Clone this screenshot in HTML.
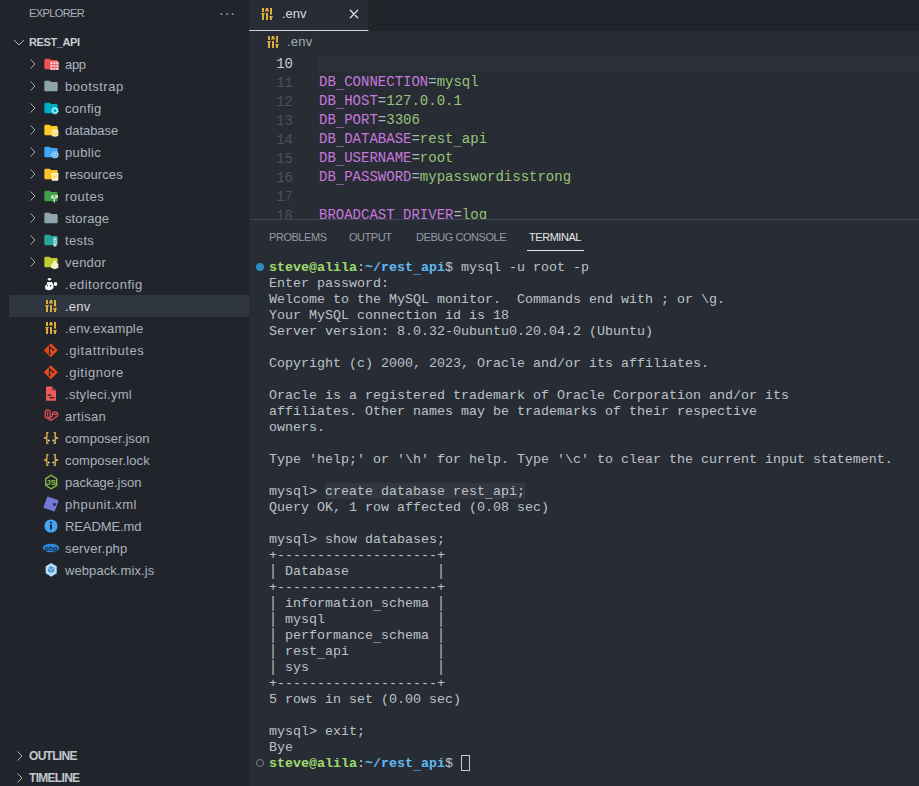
<!DOCTYPE html>
<html><head><meta charset="utf-8">
<style>
*{margin:0;padding:0;box-sizing:border-box}
html,body{width:919px;height:786px;overflow:hidden;background:#282c34}

body{position:relative;font-family:"Liberation Sans",sans-serif}
.abs{position:absolute}
#side{position:absolute;left:0;top:0;width:249px;height:786px;background:#21252b}
#sideborder{position:absolute;left:249px;top:0;width:1px;height:786px;background:#25292f}
.hdr{position:absolute;font-size:11px;color:#abb2bf;white-space:pre}
.row{position:absolute;left:0;width:249px;height:22px;line-height:22px;font-size:13px;color:#abb2bf;white-space:pre}
.row .t{position:absolute;left:65px;top:1px;letter-spacing:0.1px}
.row svg{position:absolute}
.sel{background:#30363f;left:9px;width:240px}
.sel .t{left:56px}
#tabbar{position:absolute;left:250px;top:0;width:669px;height:31px;background:#21252b;border-bottom:1px solid #1e2227}
#tab{position:absolute;left:249px;top:0;width:120px;height:31px;background:#282c34;border-bottom:1px solid #cfd3da;border-right:1px solid #1d2025}
#editor{position:absolute;left:250px;top:31px;width:669px;height:188px;background:#282c34;overflow:hidden}
.ln{position:absolute;left:0;margin-top:2px;width:43px;text-align:right;font-family:"Liberation Mono",monospace;font-size:14px;line-height:19px;color:#495162;white-space:pre}
.code{position:absolute;left:69px;margin-top:1px;font-family:"Liberation Mono",monospace;font-size:14px;line-height:19px;white-space:pre}
.k{color:#c678dd}.v{color:#98c379}.o{color:#abb2bf}
#panel{position:absolute;left:250px;top:219px;width:669px;height:567px;background:#282c34;border-top:1px solid #3e4452}
.ptab{position:absolute;top:11px;font-size:11px;color:#959ba5;white-space:pre;letter-spacing:-0.45px}
#term{position:absolute;left:19px;top:40px;font-family:"Liberation Mono",monospace;font-size:13.33px;line-height:16px;color:#bdc2ca;white-space:pre}
.pp{display:inline-block;transform:translateY(0.2px) scaleY(1.2)}
.us{position:relative;top:1.5px}.ue{position:relative;top:2px}
.pg{color:#9fdc6e;font-weight:bold;-webkit-text-stroke:0}.pb{color:#62b8f2;font-weight:bold;-webkit-text-stroke:0}
</style></head><body>
<div id="side">
  <div class="hdr" style="left:29px;top:7px;letter-spacing:-0.6px">EXPLORER</div>
  <div class="hdr" style="left:219px;top:4.5px;font-size:14px;letter-spacing:1px">···</div>
  <div class="hdr" style="left:29px;top:36px;font-weight:bold;color:#c8ccd4;letter-spacing:-0.4px">REST_API</div>
  <div class="row" style="top:53px"><span class="t" style="letter-spacing:-0.3px">app</span></div>
  <div class="row" style="top:75px"><span class="t" style="letter-spacing:0.49px">bootstrap</span></div>
  <div class="row" style="top:97px"><span class="t" style="letter-spacing:0.32px">config</span></div>
  <div class="row" style="top:119px"><span class="t" style="letter-spacing:-0.04px">database</span></div>
  <div class="row" style="top:141px"><span class="t" style="letter-spacing:0.34px">public</span></div>
  <div class="row" style="top:163px"><span class="t" style="letter-spacing:0.07px">resources</span></div>
  <div class="row" style="top:185px"><span class="t" style="letter-spacing:0.5px">routes</span></div>
  <div class="row" style="top:207px"><span class="t" style="letter-spacing:0.12px">storage</span></div>
  <div class="row" style="top:229px"><span class="t" style="letter-spacing:0.35px">tests</span></div>
  <div class="row" style="top:251px"><span class="t" style="letter-spacing:0.22px">vendor</span></div>
  <div class="row" style="top:273px"><span class="t" style="letter-spacing:0.53px">.editorconfig</span></div>
  <div class="row sel" style="top:295px"><span class="t" style="letter-spacing:0.2px;color:#d7dae0">.env</span></div>
  <div class="row" style="top:317px"><span class="t" style="letter-spacing:0.16px">.env.example</span></div>
  <div class="row" style="top:339px"><span class="t" style="letter-spacing:0.62px">.gitattributes</span></div>
  <div class="row" style="top:361px"><span class="t" style="letter-spacing:0.53px">.gitignore</span></div>
  <div class="row" style="top:383px"><span class="t" style="letter-spacing:0.29px">.styleci.yml</span></div>
  <div class="row" style="top:405px"><span class="t" style="letter-spacing:0.27px">artisan</span></div>
  <div class="row" style="top:427px"><span class="t" style="letter-spacing:0.05px">composer.json</span></div>
  <div class="row" style="top:449px"><span class="t" style="letter-spacing:0.13px">composer.lock</span></div>
  <div class="row" style="top:471px"><span class="t" style="letter-spacing:-0.02px">package.json</span></div>
  <div class="row" style="top:493px"><span class="t" style="letter-spacing:0.49px">phpunit.xml</span></div>
  <div class="row" style="top:515px"><span class="t" style="letter-spacing:-0.11px">README.md</span></div>
  <div class="row" style="top:537px"><span class="t" style="letter-spacing:0.17px">server.php</span></div>
  <div class="row" style="top:559px"><span class="t" style="letter-spacing:0.08px">webpack.mix.js</span></div>
  <div class="hdr" style="left:29px;top:748.5px;font-size:12px;font-weight:bold;color:#c2c7cf;letter-spacing:-0.7px">OUTLINE</div>
  <div class="hdr" style="left:29px;top:770.5px;font-size:12px;font-weight:bold;color:#c2c7cf;letter-spacing:-0.7px">TIMELINE</div>
</div>
<svg class="abs" style="left:0;top:0" width="249" height="786" viewBox="0 0 249 786"><polyline points="30.5,59.5 35,64 30.5,68.5" fill="none" stroke="#a3a9b3" stroke-width="1"/>
<polyline points="30.5,81.5 35,86 30.5,90.5" fill="none" stroke="#a3a9b3" stroke-width="1"/>
<polyline points="30.5,103.5 35,108 30.5,112.5" fill="none" stroke="#a3a9b3" stroke-width="1"/>
<polyline points="30.5,125.5 35,130 30.5,134.5" fill="none" stroke="#a3a9b3" stroke-width="1"/>
<polyline points="30.5,147.5 35,152 30.5,156.5" fill="none" stroke="#a3a9b3" stroke-width="1"/>
<polyline points="30.5,169.5 35,174 30.5,178.5" fill="none" stroke="#a3a9b3" stroke-width="1"/>
<polyline points="30.5,191.5 35,196 30.5,200.5" fill="none" stroke="#a3a9b3" stroke-width="1"/>
<polyline points="30.5,213.5 35,218 30.5,222.5" fill="none" stroke="#a3a9b3" stroke-width="1"/>
<polyline points="30.5,235.5 35,240 30.5,244.5" fill="none" stroke="#a3a9b3" stroke-width="1"/>
<polyline points="30.5,257.5 35,262 30.5,266.5" fill="none" stroke="#a3a9b3" stroke-width="1"/>
<g transform="translate(43,56) scale(0.6667)"><path d="M10 4H4c-1.1 0-2 .9-2 2v12c0 1.1.9 2 2 2h16c1.1 0 2-.9 2-2V8c0-1.1-.9-2-2-2h-8l-2-2z" fill="#ef5350"/><rect x="11" y="8.5" width="12.5" height="12.5" rx="0.8" fill="#ffcdd2"/><rect x="14.566666666666668" y="8.5" width="1.2" height="12.5" fill="#ef5350"/><rect x="18.733333333333334" y="8.5" width="1.2" height="12.5" fill="#ef5350"/><rect x="11" y="12.066666666666668" width="12.5" height="1.2" fill="#ef5350"/><rect x="11" y="16.233333333333334" width="12.5" height="1.2" fill="#ef5350"/></g>
<g transform="translate(43,78) scale(0.6667)"><path d="M10 4H4c-1.1 0-2 .9-2 2v12c0 1.1.9 2 2 2h16c1.1 0 2-.9 2-2V8c0-1.1-.9-2-2-2h-8l-2-2z" fill="#90a4ae"/></g>
<g transform="translate(43,100) scale(0.6667)"><path d="M10 4H4c-1.1 0-2 .9-2 2v12c0 1.1.9 2 2 2h16c1.1 0 2-.9 2-2V8c0-1.1-.9-2-2-2h-8l-2-2z" fill="#00acc1"/><circle cx="18" cy="16" r="4.2" fill="none" stroke="#8cf2f7" stroke-width="2.8" stroke-dasharray="1.7 1.1"/><circle cx="18" cy="16" r="3.3" fill="none" stroke="#8cf2f7" stroke-width="1.8"/></g>
<g transform="translate(43,122) scale(0.6667)"><path d="M10 4H4c-1.1 0-2 .9-2 2v12c0 1.1.9 2 2 2h16c1.1 0 2-.9 2-2V8c0-1.1-.9-2-2-2h-8l-2-2z" fill="#ffca28"/><ellipse cx="18" cy="13" rx="5" ry="2" fill="#ffecb3"/><rect x="13" y="13" width="10" height="7" fill="#ffecb3"/><ellipse cx="18" cy="20" rx="5" ry="2" fill="#ffecb3"/><path d="M13 15.5 q5 2.5 10 0 M13 18 q5 2.5 10 0" stroke="#ffca28" stroke-width="0.8" fill="none"/></g>
<g transform="translate(43,144) scale(0.6667)"><path d="M10 4H4c-1.1 0-2 .9-2 2v12c0 1.1.9 2 2 2h16c1.1 0 2-.9 2-2V8c0-1.1-.9-2-2-2h-8l-2-2z" fill="#42a5f5"/><circle cx="18" cy="16" r="5.3" fill="#bbdefb"/><g stroke="#42a5f5" stroke-width="0.9" fill="none"><ellipse cx="18" cy="16" rx="2.2" ry="5.3"/><line x1="12.7" y1="16" x2="23.3" y2="16"/><line x1="13.5" y1="13.3" x2="22.5" y2="13.3"/><line x1="13.5" y1="18.7" x2="22.5" y2="18.7"/></g></g>
<g transform="translate(43,166) scale(0.6667)"><path d="M10 4H4c-1.1 0-2 .9-2 2v12c0 1.1.9 2 2 2h16c1.1 0 2-.9 2-2V8c0-1.1-.9-2-2-2h-8l-2-2z" fill="#fbc02d"/><rect x="13" y="10" width="10" height="12" rx="1" fill="#fff9c4"/><g stroke="#fbc02d" stroke-width="1"><line x1="15" y1="13.5" x2="21" y2="13.5"/><line x1="15" y1="16" x2="21" y2="16"/><line x1="15" y1="18.5" x2="19" y2="18.5"/></g></g>
<g transform="translate(43,188) scale(0.6667)"><path d="M10 4H4c-1.1 0-2 .9-2 2v12c0 1.1.9 2 2 2h16c1.1 0 2-.9 2-2V8c0-1.1-.9-2-2-2h-8l-2-2z" fill="#43a047"/><path d="M17 21 V16 L13 12 M17 16 L21.5 11.5 M13 12 l0 3 M13 12 l3 0 M21.5 11.5 l-3 0 M21.5 11.5 l0 3" stroke="#c8e6c9" stroke-width="2" fill="none" stroke-linecap="round"/></g>
<g transform="translate(43,210) scale(0.6667)"><path d="M10 4H4c-1.1 0-2 .9-2 2v12c0 1.1.9 2 2 2h16c1.1 0 2-.9 2-2V8c0-1.1-.9-2-2-2h-8l-2-2z" fill="#90a4ae"/></g>
<g transform="translate(43,232) scale(0.6667)"><path d="M10 4H4c-1.1 0-2 .9-2 2v12c0 1.1.9 2 2 2h16c1.1 0 2-.9 2-2V8c0-1.1-.9-2-2-2h-8l-2-2z" fill="#26a69a"/><rect x="15.5" y="8" width="5" height="14" rx="2.5" fill="#b2dfdb"/><rect x="17" y="12" width="2" height="1.5" fill="#26a69a"/><rect x="17" y="15" width="2" height="1.5" fill="#26a69a"/></g>
<g transform="translate(43,254) scale(0.6667)"><path d="M10 4H4c-1.1 0-2 .9-2 2v12c0 1.1.9 2 2 2h16c1.1 0 2-.9 2-2V8c0-1.1-.9-2-2-2h-8l-2-2z" fill="#c0ca33"/><path d="M12 15 L17.5 12 L23 15 L23 20.5 L17.5 23 L12 20.5 Z" fill="#f0f4c3"/><path d="M17.5 9 v3.5 M15.5 11 l2 2 l2 -2" stroke="#f0f4c3" stroke-width="1.6" fill="none"/></g>
<g fill="#f5f5f5"><ellipse cx="49.5" cy="279.3" rx="1.7" ry="1.3"/><path d="M47 282 h5 l1.5 3 l0 3 q-2 2.5 -5 2.3 q-3.5 0 -3.5 -3 q0 -2.5 2 -3 z"/><ellipse cx="55.5" cy="284" rx="1.8" ry="2" /></g><g fill="#21252b"><rect x="47" y="285" width="1" height="1"/><rect x="50" y="285" width="1" height="1.6"/></g>
<rect x="46" y="300" width="2" height="4" fill="#dcae3c"/><path d="M45 305 h4 l-1 2 h-2 z" fill="#dcae3c"/><rect x="46" y="307" width="2" height="5" fill="#dcae3c"/><path d="M50 300 h2 l1 3.6 h-4 z" fill="#dcae3c"/><rect x="50" y="305" width="2" height="7" fill="#dcae3c"/><rect x="54" y="300" width="2" height="6.6" fill="#dcae3c"/><path d="M53 308 h4 l-1 2 h-2 z" fill="#dcae3c"/><rect x="54" y="310" width="2" height="2" fill="#dcae3c"/>
<rect x="46" y="322" width="2" height="4" fill="#dcae3c"/><path d="M45 327 h4 l-1 2 h-2 z" fill="#dcae3c"/><rect x="46" y="329" width="2" height="5" fill="#dcae3c"/><path d="M50 322 h2 l1 3.6 h-4 z" fill="#dcae3c"/><rect x="50" y="327" width="2" height="7" fill="#dcae3c"/><rect x="54" y="322" width="2" height="6.6" fill="#dcae3c"/><path d="M53 330 h4 l-1 2 h-2 z" fill="#dcae3c"/><rect x="54" y="332" width="2" height="2" fill="#dcae3c"/>
<path d="M50.8 343.2 L57.8 350.2 L50.8 357.2 L43.8 350.2 Z" fill="#e64a19"/>
<path d="M49.599999999999994 345.7 L49.599999999999994 354.2 M49.599999999999994 347.2 L53.0 349.7" stroke="#21252b" stroke-width="1.1" fill="none"/><circle cx="53.099999999999994" cy="349.9" r="1" fill="#21252b"/><circle cx="49.599999999999994" cy="353.2" r="1" fill="#21252b"/>
<path d="M50.8 365.2 L57.8 372.2 L50.8 379.2 L43.8 372.2 Z" fill="#e64a19"/>
<path d="M49.599999999999994 367.7 L49.599999999999994 376.2 M49.599999999999994 369.2 L53.0 371.7" stroke="#21252b" stroke-width="1.1" fill="none"/><circle cx="53.099999999999994" cy="371.9" r="1" fill="#21252b"/><circle cx="49.599999999999994" cy="375.2" r="1" fill="#21252b"/>
<path d="M46 386.5 h6 l4 4 v10.2 h-10 z" fill="#f05a5a"/><path d="M52 386.5 v4 h4" fill="#21252b" opacity="0.5"/><rect x="47.5" y="394.5" width="4" height="1.3" fill="#21252b"/><rect x="49.5" y="397" width="5" height="1.3" fill="#21252b"/>
<path d="M45.3 411 L47.7 409.6 L50.1 411 L50.1 417.3 L52.4 416 L52.4 413.2 L55 411.8 L57.5 413.2 L57.5 416 L51 420.3 L45.3 417.2 Z" fill="none" stroke="#e0474c" stroke-width="1.4" stroke-linejoin="round"/><path d="M47.7 411.5 V417 L51 418.5 M52.5 413.5 L55 414.8 L57.3 413.4" fill="none" stroke="#e86a6d" stroke-width="0.9"/>
<g fill="none" stroke="#e8bd55" stroke-width="1.3" stroke-linejoin="round"><polyline points="48.4,432.6 46.9,432.6 46.9,437.2 44.3,438 46.9,438.8 46.9,443.3 48.4,443.3"/><polyline points="53.7,432.6 55.2,432.6 55.2,437.2 57.8,438 55.2,438.8 55.2,443.3 53.7,443.3"/></g><circle cx="48.8" cy="440.5" r="0.9" fill="#efe0b0"/><circle cx="53.3" cy="440.5" r="0.9" fill="#efe0b0"/>
<g fill="none" stroke="#e8bd55" stroke-width="1.3" stroke-linejoin="round"><polyline points="48.4,454.6 46.9,454.6 46.9,459.2 44.3,460 46.9,460.8 46.9,465.3 48.4,465.3"/><polyline points="53.7,454.6 55.2,454.6 55.2,459.2 57.8,460 55.2,460.8 55.2,465.3 53.7,465.3"/></g><circle cx="48.8" cy="462.5" r="0.9" fill="#efe0b0"/><circle cx="53.3" cy="462.5" r="0.9" fill="#efe0b0"/>
<polygon points="51.20,488.80 45.74,485.40 45.74,478.60 51.20,475.20 56.66,478.60 56.66,485.40" fill="none" stroke="#8bc34a" stroke-width="1.3"/><text x="51.2" y="485" text-anchor="middle" font-family="Liberation Sans" font-size="8" font-weight="bold" fill="#8bc34a">JS</text>
<g transform="rotate(20 51 504)"><rect x="45" y="498" width="12" height="12" rx="1" fill="#7079d6"/></g><circle cx="54.5" cy="504.5" r="1.4" fill="#21252b"/>
<circle cx="51" cy="526" r="6.6" fill="#42a5f5"/><rect x="50" y="524.5" width="2" height="5" fill="#21252b"/><circle cx="51" cy="522.5" r="1.1" fill="#21252b"/>
<ellipse cx="51" cy="548" rx="8.2" ry="4.2" fill="#2b8ae0"/><text x="51" y="550.5" text-anchor="middle" font-family="Liberation Sans" font-size="7" font-style="italic" font-weight="bold" fill="#1b2433">php</text>
<polygon points="51.20,576.70 45.66,573.25 45.66,566.35 51.20,562.90 56.74,566.35 56.74,573.25" fill="#b3dcf5"/><path d="M51.2 566.3 l3 1.7 v3.5 l-3 1.7 l-3 -1.7 v-3.5 z" fill="#3d8fcf"/><path d="M48.2 568.0 l3 1.7 l3 -1.7 M51.2 569.8 v3.4" stroke="#b3dcf5" stroke-width="0.8" fill="none"/>
<polyline points="14,40 19,45 24,40" fill="none" stroke="#b0b6bf" stroke-width="1"/>
<polyline points="17.5,751.5 22,756 17.5,760.5" fill="none" stroke="#b0b6bf" stroke-width="1"/>
<polyline points="17.5,773.5 22,778 17.5,782.5" fill="none" stroke="#b0b6bf" stroke-width="1"/></svg>
<div id="sideborder"></div>
<div id="tabbar"></div>
<div id="tab"></div>
<div id="editor">
  <div class="abs" style="left:68px;top:25.5px;width:601px;height:15.5px;background:#2c313c"></div>
  <div class="ln" style="top:22px;color:#c5cad3">10</div>
  <div class="ln" style="top:41px">11</div>
  <div class="ln" style="top:60px">12</div>
  <div class="ln" style="top:79px">13</div>
  <div class="ln" style="top:98px">14</div>
  <div class="ln" style="top:117px">15</div>
  <div class="ln" style="top:136px">16</div>
  <div class="ln" style="top:155px">17</div>
  <div class="ln" style="top:174px">18</div>
  <div class="code" style="top:41px"><span class="k">DB<span class="ue">_</span>CONNECTION</span><span class="o">=</span><span class="v">mysql</span></div>
  <div class="code" style="top:60px"><span class="k">DB<span class="ue">_</span>HOST</span><span class="o">=</span><span class="v">127.0.0.1</span></div>
  <div class="code" style="top:79px"><span class="k">DB<span class="ue">_</span>PORT</span><span class="o">=</span><span class="v">3306</span></div>
  <div class="code" style="top:98px"><span class="k">DB<span class="ue">_</span>DATABASE</span><span class="o">=</span><span class="v">rest<span class="ue">_</span>api</span></div>
  <div class="code" style="top:117px"><span class="k">DB<span class="ue">_</span>USERNAME</span><span class="o">=</span><span class="v">root</span></div>
  <div class="code" style="top:136px"><span class="k">DB<span class="ue">_</span>PASSWORD</span><span class="o">=</span><span class="v">mypasswordisstrong</span></div>
  <div class="code" style="top:174px"><span class="k">BROADCAST<span class="ue">_</span>DRIVER</span><span class="o">=</span><span class="v">log</span></div>
</div>
<div class="abs" style="left:282px;top:6px;font-size:13px;line-height:16px;color:#d7dae0">.env</div>
<svg class="abs" style="left:349px;top:9px" width="10" height="10" viewBox="0 0 10 10"><path d="M1.3 1.3 L8.7 8.7 M8.7 1.3 L1.3 8.7" stroke="#dfe2e7" stroke-width="1.3" stroke-linecap="round"/></svg>
<div class="abs" style="left:287px;top:34px;font-size:13px;line-height:16px;color:#a3aab5;letter-spacing:0.2px">.env</div>
<svg class="abs" style="left:0;top:0" width="919" height="60" viewBox="0 0 919 60"><rect x="262" y="8" width="2" height="4" fill="#dcae3c"/><path d="M261 13 h4 l-1 2 h-2 z" fill="#dcae3c"/><rect x="262" y="15" width="2" height="5" fill="#dcae3c"/><path d="M266 8 h2 l1 3.6 h-4 z" fill="#dcae3c"/><rect x="266" y="13" width="2" height="7" fill="#dcae3c"/><rect x="270" y="8" width="2" height="6.6" fill="#dcae3c"/><path d="M269 16 h4 l-1 2 h-2 z" fill="#dcae3c"/><rect x="270" y="18" width="2" height="2" fill="#dcae3c"/><rect x="268" y="36" width="2" height="4" fill="#dcae3c"/><path d="M267 41 h4 l-1 2 h-2 z" fill="#dcae3c"/><rect x="268" y="43" width="2" height="5" fill="#dcae3c"/><path d="M272 36 h2 l1 3.6 h-4 z" fill="#dcae3c"/><rect x="272" y="41" width="2" height="7" fill="#dcae3c"/><rect x="276" y="36" width="2" height="6.6" fill="#dcae3c"/><path d="M275 44 h4 l-1 2 h-2 z" fill="#dcae3c"/><rect x="276" y="46" width="2" height="2" fill="#dcae3c"/></svg>
<div id="panel">
  <div class="ptab" style="left:19px">PROBLEMS</div>
  <div class="ptab" style="left:99px">OUTPUT</div>
  <div class="ptab" style="left:166px">DEBUG CONSOLE</div>
  <div class="ptab" style="left:279px;color:#e6e6e6">TERMINAL</div>
  <div class="abs" style="left:277px;top:30px;width:57px;height:1px;background:#e4e7ec"></div>
  <div class="abs" style="left:6px;top:43px;width:8px;height:8px;border-radius:50%;background:#2f8ac0"></div>
  <div class="abs" style="left:6px;top:539px;width:8px;height:8px;border-radius:50%;border:1px solid #7a7f88"></div>
  <div class="abs" style="left:211px;top:535px;width:9px;height:16px;border:1px solid #c5c9d0"></div>
  <div class="abs" style="left:75px;top:263px;width:200px;height:16px;background:#33373f"></div>
<div id="term"><span class="pg">steve@alila</span>:<span class="pb">~/rest<span class="us">_</span>api</span>$ mysql -u root -p
Enter password:
Welcome to the MySQL monitor.  Commands end with ; or \g.
Your MySQL connection id is 18
Server version: 8.0.32-0ubuntu0.20.04.2 (Ubuntu)

Copyright (c) 2000, 2023, Oracle and/or its affiliates.

Oracle is a registered trademark of Oracle Corporation and/or its
affiliates. Other names may be trademarks of their respective
owners.

Type 'help;' or '\h' for help. Type '\c' to clear the current input statement.

mysql> create database rest<span class="us">_</span>api;
Query OK, 1 row affected (0.08 sec)

mysql> show databases;
+--------------------+
<span class="pp">|</span> Database           <span class="pp">|</span>
+--------------------+
<span class="pp">|</span> information<span class="us">_</span>schema <span class="pp">|</span>
<span class="pp">|</span> mysql              <span class="pp">|</span>
<span class="pp">|</span> performance<span class="us">_</span>schema <span class="pp">|</span>
<span class="pp">|</span> rest<span class="us">_</span>api           <span class="pp">|</span>
<span class="pp">|</span> sys                <span class="pp">|</span>
+--------------------+
5 rows in set (0.00 sec)

mysql> exit;
Bye
<span class="pg">steve@alila</span>:<span class="pb">~/rest<span class="us">_</span>api</span>$ </div>
</div>
</body></html>
